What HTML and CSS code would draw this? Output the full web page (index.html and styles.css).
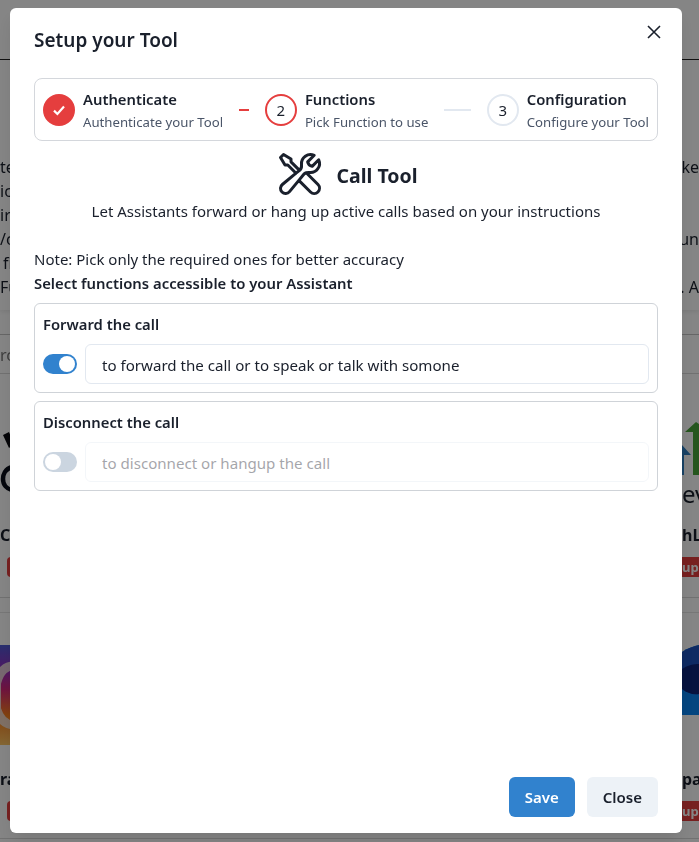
FILE: index.html
```html
<!DOCTYPE html>
<html>
<head>
<meta charset="UTF-8">
<title>Setup your Tool</title>
<link rel="stylesheet" href="styles.css">
</head>
<body>
	<div class="page">
		<div class="top-bar"></div>
		<div class="intro">
			<div class="intro-line"><span>te</span><span>ke</span></div>
			<div class="intro-line"><span>ic</span></div>
			<div class="intro-line"><span>ir</span></div>
			<div class="intro-line"><span>/c</span><span>un</span></div>
			<div class="intro-line"><span class="indent">fi</span></div>
			<div class="intro-line"><span>Fu</span><span>. A</span></div>
		</div>
		<div class="search">rc</div>

		<div class="card-row first">
			<div class="slice">
				<div class="logo">
					<svg width="14" height="72" viewBox="0 0 14 72">
						<path d="M3 15 L9 12 L14 24 L9 28 Z" fill="#0b0b10"/>
						<path d="M12 47 C5 49 3 55 3 59 C3 65 7 69 12 70" fill="none" stroke="#0b0f1a" stroke-width="4.5"/>
					</svg>
				</div>
				<div class="name">Ca</div>
				<div class="badge left"></div>
			</div>
			<div class="slice right">
				<div class="logo">
					<svg width="17" height="57" viewBox="0 0 17 57">
						<path d="M0 25 L9 35 H2 V55 H0 Z" fill="#2f7fc1"/>
						<path d="M3 12 L14 2 L17 4 V55 H11 V12 Z" fill="#4aa53b"/>
					</svg>
					<div class="logo-word">ev</div>
				</div>
				<div class="name">hL</div>
				<div class="badge">up</div>
			</div>
		</div>

		<div class="card-row second">
			<div class="slice">
				<div class="logo tall">
					<svg width="14" height="100" viewBox="0 0 14 100">
						<defs>
							<linearGradient id="insta" x1="0" y1="0" x2="0" y2="1">
								<stop offset="0" stop-color="#4f5bd5"/>
								<stop offset="0.25" stop-color="#962fbf"/>
								<stop offset="0.45" stop-color="#d62976"/>
								<stop offset="0.7" stop-color="#fa7e1e"/>
								<stop offset="1" stop-color="#fec564"/>
							</linearGradient>
						</defs>
						<rect width="14" height="100" fill="url(#insta)"/>
						<path d="M14 21 C6 21 0 25 -3.5 38 V64 C0 75 6 80 14 80" fill="none" stroke="#f1e3dc" stroke-width="9" opacity="0.85"/>
					</svg>
				</div>
				<div class="name">ra</div>
				<div class="badge left"></div>
			</div>
			<div class="slice right">
				<div class="logo tall">
					<svg width="17" height="100" viewBox="0 0 17 100">
						<path d="M0 7 C6 3 12 1 17 0 V70 H0 Z" fill="#0885f4"/>
						<path d="M0 7 C6 3 12 1 17 0 V49 C11 50 5 48 0 44 Z" fill="#1b51be"/>
						<path d="M0 24 C6 20 12 19 17 19 V49 C11 50 5 48 0 44 Z" fill="#0e2579"/>
					</svg>
				</div>
				<div class="name">pa</div>
				<div class="badge">up</div>
			</div>
		</div>
	</div>

	<div class="overlay"></div>

	<div class="modal">
		<h2 class="modal-title">Setup your Tool</h2>
		<button class="close-btn" type="button" aria-label="Close">
			<svg width="14" height="14" viewBox="0 0 14 14"><path d="M1 1 L13 13 M13 1 L1 13" stroke="#1a202c" stroke-width="1.6" fill="none"/></svg>
		</button>

		<div class="stepper">
			<div class="step">
				<div class="step-circle done">
					<svg width="14" height="14" viewBox="0 0 14 14"><path d="M2 7.6 L5.4 11 L12 3.6" stroke="#fff" stroke-width="2.2" fill="none"/></svg>
				</div>
				<div class="step-text">
					<div class="step-title">Authenticate</div>
					<div class="step-desc">Authenticate your Tool</div>
				</div>
				<div class="step-line active"></div>
			</div>
			<div class="step">
				<div class="step-circle current">2</div>
				<div class="step-text">
					<div class="step-title">Functions</div>
					<div class="step-desc">Pick Function to use</div>
				</div>
				<div class="step-line"></div>
			</div>
			<div class="step last">
				<div class="step-circle">3</div>
				<div class="step-text">
					<div class="step-title">Configuration</div>
					<div class="step-desc">Configure your Tool</div>
				</div>
			</div>
		</div>

		<div class="tool-head">
			<svg class="tool-icon" width="48" height="48" viewBox="0 0 24 24" fill="none" stroke="#1a202c" stroke-width="1.5" stroke-linecap="round" stroke-linejoin="round">
				<path d="M11.42 15.17 17.25 21A2.652 2.652 0 0 0 21 17.25l-5.877-5.877M11.42 15.17l2.496-3.03c.317-.384.74-.626 1.208-.766M11.42 15.17l-4.655 5.653a2.548 2.548 0 1 1-3.586-3.586l6.837-5.63m5.108-.233c.55-.164 1.163-.188 1.743-.14a4.5 4.5 0 0 0 4.486-6.336l-3.276 3.277a3.004 3.004 0 0 1-2.25-2.25l3.276-3.276a4.5 4.5 0 0 0-6.336 4.486c.091 1.076-.071 2.264-.904 2.95l-.102.085m-1.745 1.437L5.909 7.5H4.5L2.25 3.75l1.5-1.5L7.5 4.5v1.409l4.26 4.26m-1.745 1.437 1.745-1.437"/>
			</svg>
			<span class="tool-name">Call Tool</span>
		</div>
		<p class="tool-desc">Let Assistants forward or hang up active calls based on your instructions</p>

		<p class="note">Note: Pick only the required ones for better accuracy</p>
		<p class="select-label">Select functions accessible to your Assistant</p>

		<div class="fn-card">
			<div class="fn-title">Forward the call</div>
			<div class="fn-row">
				<span class="toggle on"><span class="thumb"></span></span>
				<input class="fn-input" type="text" value="to forward the call or to speak or talk with somone">
			</div>
		</div>
		<div class="fn-card">
			<div class="fn-title">Disconnect the call</div>
			<div class="fn-row">
				<span class="toggle"><span class="thumb"></span></span>
				<input class="fn-input" type="text" value="to disconnect or hangup the call" disabled>
			</div>
		</div>

		<div class="modal-footer">
			<button class="btn save" type="button">Save</button>
			<button class="btn" type="button">Close</button>
		</div>
	</div>
</body>
</html>
```

FILE: styles.css
```css
* {
	box-sizing: border-box;
}

html, body {
	margin: 0;
	height: 100%;
	overflow: hidden;
}

body {
	background: #fff;
	color: #1a202c;
	font-family: "Noto Sans", sans-serif;
	font-size: 15px;
}

/* page behind the modal */
.page {
	height: 842px;
	overflow: hidden;
	will-change: transform;
}

.top-bar {
	height: 60px;
	border-bottom: 1px solid #222;
}

.intro {
	height: 250px;
	padding-top: 95px;
	box-shadow: 0 2px 4px rgba(0, 0, 0, 0.08);
}

.intro-line {
	display: flex;
	justify-content: space-between;
	height: 24px;
	line-height: 24px;
	font-size: 16px;
}

.indent {
	padding-left: 3px;
}

.search {
	margin-top: 24px;
	height: 40px;
	line-height: 40px;
	border-top: 1px solid #c4c4c4;
	border-bottom: 1px solid #d8d8d8;
	color: #777;
	font-size: 16px;
}

.card-row {
	display: flex;
	justify-content: space-between;
}

.card-row.first {
	height: 224px;
	padding-top: 46px;
	border-bottom: 1px solid #d8d8d8;
}

.card-row.second {
	height: 227px;
	margin-top: 14px;
	padding-top: 32px;
	border-top: 1px solid #e4e4e4;
	border-bottom: 1px solid #d8d8d8;
}

.slice {
	width: 17px;
	overflow: hidden;
	white-space: nowrap;
}

.logo {
	height: 103px;
}

.logo svg {
	display: block;
	overflow: hidden;
}

.logo.tall {
	height: 122px;
}

.logo-word {
	margin-top: 2px;
	font-size: 24px;
	line-height: 30px;
}

.name {
	height: 24px;
	line-height: 24px;
	font-size: 16px;
	font-weight: 700;
}

.badge {
	height: 20px;
	line-height: 20px;
	margin-top: 10px;
	background: #e53e3e;
	color: #fff;
	font-size: 13px;
	font-weight: 700;
}

.badge.left {
	margin-left: 7px;
	border-radius: 4px;
}

.overlay {
	position: fixed;
	inset: 0;
	background: rgba(0, 0, 0, 0.48);
}

/* modal */
.modal {
	position: absolute;
	top: 8px;
	left: 10px;
	width: 672px;
	height: 825px;
	padding: 0 24px 16px;
	display: flex;
	flex-direction: column;
	background: #fff;
	border-radius: 6px;
	box-shadow: 0 10px 15px -3px rgba(0, 0, 0, 0.1);
}

.modal-title {
	margin: 16px 0 0;
	font-size: 19px;
	line-height: 32px;
	font-weight: 600;
}

.close-btn {
	position: absolute;
	top: 8px;
	right: 12px;
	width: 32px;
	height: 32px;
	padding: 0;
	border: 0;
	background: none;
	display: flex;
	align-items: center;
	justify-content: center;
}

.stepper {
	display: flex;
	align-items: center;
	gap: 16px;
	margin-top: 22px;
	height: 63px;
	padding: 0 8px;
	border: 1px solid #d4d7dc;
	border-radius: 8px;
}

.step {
	flex: 1;
	display: flex;
	align-items: center;
	gap: 8px;
}

.step.last {
	flex: 0 0 auto;
}

.step-circle {
	flex-shrink: 0;
	width: 32px;
	height: 32px;
	border-radius: 50%;
	border: 2px solid #e2e8f0;
	display: flex;
	align-items: center;
	justify-content: center;
	font-size: 15px;
}

.step-circle.done {
	background: #e53e3e;
	border-color: #e53e3e;
}

.step-circle.current {
	border-color: #e53e3e;
}

.step-text {
	flex-shrink: 0;
	white-space: nowrap;
}

.step-title {
	font-size: 14.8px;
	line-height: 22px;
	font-weight: 600;
}

.step-desc {
	margin-bottom: -1px;
	padding-top: 1px;
	font-size: 13.2px;
	line-height: 22px;
	color: #4a5568;
}

.step-line {
	flex: 1;
	height: 2px;
	margin-left: 8px;
	background: #e2e8f0;
}

.step-line.active {
	background: #e53e3e;
}

.tool-head {
	display: flex;
	align-items: center;
	justify-content: center;
	gap: 13px;
	height: 50px;
	margin-top: 8px;
}

.tool-icon {
	margin-left: 1px;
}

.tool-name {
	font-size: 19.5px;
	font-weight: 700;
	padding-top: 2px;
}

.tool-desc {
	margin: 0;
	height: 24px;
	line-height: 24px;
	text-align: center;
	font-size: 15px;
}

.note {
	margin: 24px 0 0;
	line-height: 24px;
	font-size: 15px;
}

.select-label {
	margin: 0 0 8px;
	line-height: 24px;
	font-size: 14.85px;
	font-weight: 600;
}

.fn-card {
	height: 90px;
	margin-bottom: 8px;
	padding: 8px;
	border: 1px solid #cfd3d8;
	border-radius: 6px;
}

.fn-title {
	height: 24px;
	line-height: 24px;
	font-size: 14.8px;
	font-weight: 600;
}

.fn-row {
	display: flex;
	align-items: center;
	gap: 8px;
	margin-top: 8px;
}

.toggle {
	flex-shrink: 0;
	width: 34px;
	height: 20px;
	padding: 2px;
	border-radius: 10px;
	background: #cbd5e0;
}

.toggle.on {
	background: #3182ce;
}

.thumb {
	display: block;
	width: 16px;
	height: 16px;
	border-radius: 50%;
	background: #fff;
}

.toggle.on .thumb {
	margin-left: 14px;
}

.fn-input {
	flex: 1;
	min-width: 0;
	height: 40px;
	padding: 1px 16px 0;
	border: 1px solid #e2e8f0;
	border-radius: 6px;
	background: #fff;
	color: #1a202c;
	font-family: inherit;
	font-size: 15.1px;
}

.fn-input:disabled {
	opacity: 0.4;
}

.modal-footer {
	margin-top: auto;
	display: flex;
	justify-content: flex-end;
	gap: 12px;
}

.btn {
	height: 40px;
	padding: 0 16px;
	border: 0;
	border-radius: 6px;
	background: #edf2f7;
	color: #1a202c;
	font-family: inherit;
	font-size: 15px;
	font-weight: 600;
}

.btn.save {
	background: #3182ce;
	color: #fff;
}
```
